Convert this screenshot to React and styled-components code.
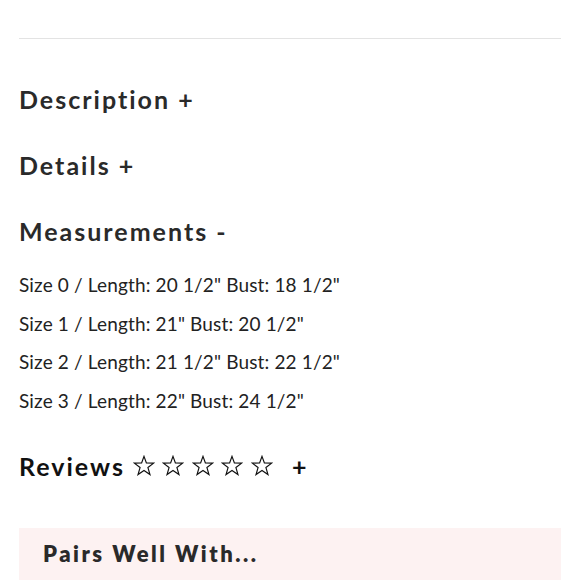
import React from 'react';
import styled, { createGlobalStyle } from 'styled-components';

const GlobalStyle = createGlobalStyle`
  html, body {
    margin: 0;
    padding: 0;
    background: #ffffff;
  }
  body {
    font-family: 'Lato', 'Noto Sans', sans-serif;
  }
`;

const Page = styled.section`
  width: 580px;
  height: 580px;
  overflow: hidden;
  box-sizing: border-box;
  padding: 38px 19px 0 19px;
`;

const Divider = styled.hr`
  margin: 0;
  border: none;
  border-top: 1px solid #e3e3e3;
`;

const Heading = styled.h2`
  margin: ${(p) => p.$top || 0}px 0 0 0;
  font-family: 'Lato', sans-serif;
  font-size: 25px;
  font-weight: 700;
  letter-spacing: 2px;
  line-height: 32px;
  color: ${(p) => (p.$dark ? '#111111' : '#2a2a2a')};
  display: flex;
  align-items: center;
`;

const SizeList = styled.ul`
  list-style: none;
  margin: 26px 0 0 0;
  padding: 0;
  display: flex;
  flex-direction: column;
  gap: 14px;
`;

const SizeItem = styled.li`
  font-family: 'Lato', sans-serif;
  font-size: 19px;
  letter-spacing: 0.15px;
  line-height: 24.5px;
  color: #222222;
`;

const Stars = styled.span`
  display: inline-flex;
  gap: 7.5px;
  margin-left: 8px;
  margin-right: 19px;
`;

const PairsBox = styled.div`
  margin-top: 46px;
  background: #fdf2f2;
  padding: 12px 24px;
  height: 60px;
  box-sizing: border-box;
`;

const PairsTitle = styled.h3`
  margin: 0;
  font-family: 'Lato', sans-serif;
  font-size: 22px;
  font-weight: 800;
  letter-spacing: 2.5px;
  color: #2a2a2a;
`;

const Star = () => (
  <svg width="22" height="22" viewBox="0 0 24 24">
    <polygon
      points="12,1.5 14.6,8.6 22.5,8.9 16.3,13.7 18.5,21.3 12,16.9 5.5,21.3 7.7,13.7 1.5,8.9 9.4,8.6"
      fill="none"
      stroke="#111111"
      strokeWidth="1.3"
      strokeLinejoin="miter"
    />
  </svg>
);

const sizes = [
  'Size 0 / Length: 20 1/2" Bust: 18 1/2"',
  'Size 1 / Length: 21" Bust: 20 1/2"',
  'Size 2 / Length: 21 1/2" Bust: 22 1/2"',
  'Size 3 / Length: 22" Bust: 24 1/2"',
];

const App = () => {
  return (
    <React.Fragment>
      <GlobalStyle />
      <Page>
        <Divider />
        <Heading $top={44}>Description +</Heading>
        <Heading $top={34}>Details +</Heading>
        <Heading $top={34}>Measurements -</Heading>
        <SizeList>
          {sizes.map((s) => (
            <SizeItem key={s}>{s}</SizeItem>
          ))}
        </SizeList>
        <Heading $top={37} $dark>
          Reviews
          <Stars>
            {[0, 1, 2, 3, 4].map((i) => (
              <Star key={i} />
            ))}
          </Stars>
          +
        </Heading>
        <PairsBox>
          <PairsTitle>Pairs Well With...</PairsTitle>
        </PairsBox>
      </Page>
    </React.Fragment>
  );
};

export default App;
